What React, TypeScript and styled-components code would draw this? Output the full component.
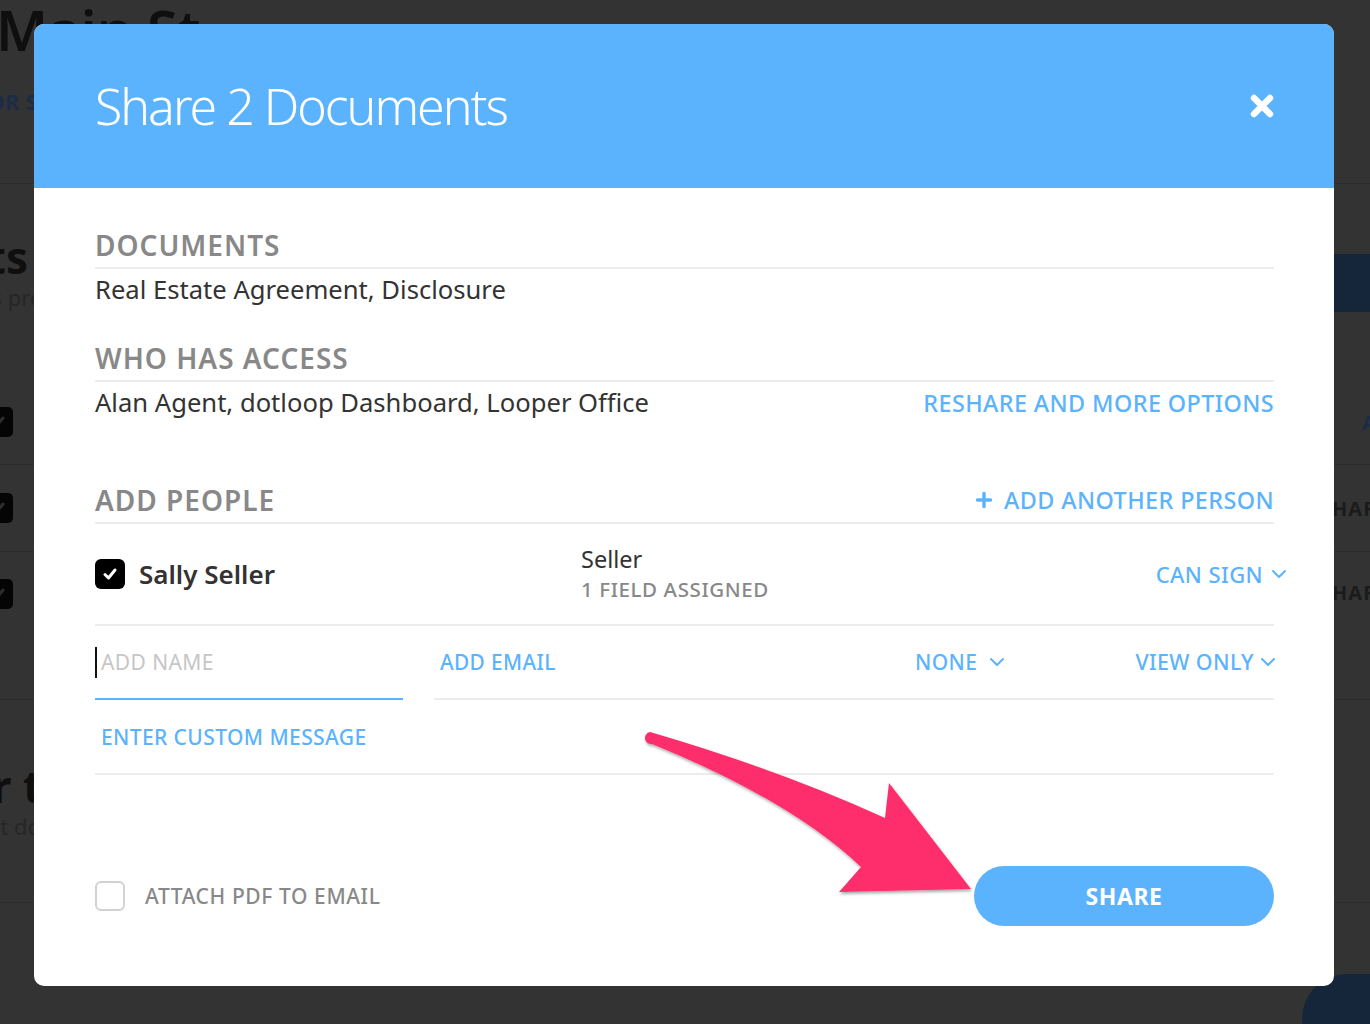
import React from "react";
import styled, { createGlobalStyle } from "styled-components";

const BLUE = "#5cb3fd";
const NAVY = "#15253a";

const GlobalStyle = createGlobalStyle`
  html, body { margin: 0; padding: 0; }
  body {
    background: #333333;
    font-family: "Noto Sans", "Open Sans", Arial, sans-serif;
  }
  * { box-sizing: border-box; }
`;

/* ---------- page behind the dialog (dimmed) ---------- */

const Page = styled.div`
  position: relative;
  width: 100%;
  height: 1024px;
  overflow: hidden;
  background: #333333;
  color: #0f0f0f;
`;

const PageHeader = styled.header`
  height: 184px;
  border-bottom: 1px solid #2b2b2b;
  display: flex;
  flex-direction: column;
`;

const PageTitle = styled.h1`
  margin: -2px 0 0 -4px;
  font-size: 56px;
  line-height: 62px;
  font-weight: 600;
  color: #0f0f0f;
  white-space: nowrap;
`;

const PageTag = styled.div`
  margin: 27px 0 0 -24px;
  font-size: 21px;
  line-height: 30px;
  font-weight: 700;
  color: #1a2c46;
  letter-spacing: 0.5px;
`;

const Row = styled.div<{ $height: number; $align?: string; $border?: boolean }>`
  height: ${(p) => p.$height}px;
  display: flex;
  justify-content: space-between;
  align-items: ${(p) => p.$align || "center"};
  border-bottom: ${(p) => (p.$border === false ? "none" : "1px solid #2c2c2c")};
`;

const LeftEdge = styled.div<{ $shift: number }>`
  display: flex;
  flex-direction: column;
  margin-left: ${(p) => p.$shift}px;
  white-space: nowrap;
`;

const RightEdge = styled.div`
  width: 36px;
  white-space: nowrap;
`;

const BigHeading = styled.div`
  font-size: 44px;
  line-height: 50px;
  font-weight: 700;
  color: #0f0f0f;
`;

const SubHeading = styled.div<{ $indent: number }>`
  margin-left: ${(p) => p.$indent}px;
  font-size: 22px;
  line-height: 30px;
  color: #262626;
`;

const DimBox = styled.div`
  width: 30px;
  height: 30px;
  margin-left: -17px;
  border-radius: 5px;
  background: #050505;
  display: flex;
  align-items: center;
  justify-content: center;
`;

const DimLink = styled.div<{ $dark?: boolean; $indent?: number }>`
  margin-left: ${(p) => p.$indent || 0}px;
  font-size: 20px;
  font-weight: 700;
  letter-spacing: 1px;
  color: ${(p) => (p.$dark ? "#1b1b1b" : "#1a2c46")};
`;

const NavyBar = styled.div`
  width: 240px;
  height: 58px;
  background: ${NAVY};
`;

const NavyPill = styled.div`
  position: absolute;
  right: -60px;
  bottom: -40px;
  width: 128px;
  height: 90px;
  border-radius: 45px;
  background: ${NAVY};
`;

/* ---------- dialog ---------- */

const Overlay = styled.div`
  position: fixed;
  inset: 0;
  display: flex;
  align-items: flex-start;
  padding: 24px 0 0 34px;
`;

const Modal = styled.div`
  position: relative;
  width: 1300px;
  background: #ffffff;
  border-radius: 10px;
  overflow: hidden;
`;

const ModalHeader = styled.div`
  height: 164px;
  background: ${BLUE};
  display: flex;
  align-items: center;
  justify-content: space-between;
  padding: 0 60px 0 61px;
`;

const ModalTitle = styled.h1`
  margin: 0;
  font-size: 50px;
  font-weight: 300;
  letter-spacing: -2px;
  color: #ffffff;
  line-height: 64px;
`;

const CloseButton = styled.button`
  border: 0;
  padding: 0;
  background: none;
  width: 24px;
  height: 24px;
  display: flex;
  cursor: pointer;
`;

const ModalBody = styled.div`
  display: flex;
  flex-direction: column;
  padding: 39px 60px 60px 61px;
`;

const SectionHead = styled.div<{ $top?: number }>`
  display: flex;
  align-items: center;
  justify-content: space-between;
  margin-top: ${(p) => p.$top || 0}px;
  padding-bottom: 4px;
  border-bottom: 2px solid #ececec;
`;

const SectionTitle = styled.h2`
  margin: 0;
  font-size: 28px;
  line-height: 36px;
  font-weight: 600;
  color: #888888;
  letter-spacing: 1px;
`;

const ValueRow = styled.div`
  display: flex;
  align-items: center;
  justify-content: space-between;
  margin-top: 5px;
`;

const ValueText = styled.div`
  font-size: 25.6px;
  line-height: 32px;
  color: #333333;
`;

const LinkButton = styled.button<{ $size?: number; $push?: number }>`
  border: 0;
  padding: 0;
  background: none;
  font-family: inherit;
  font-size: ${(p) => p.$size || 23.4}px;
  line-height: 30px;
  font-weight: 500;
  color: ${BLUE};
  letter-spacing: 0.4px;
  display: inline-flex;
  align-items: center;
  gap: 8px;
  margin-right: ${(p) => p.$push || 0}px;
  cursor: pointer;
  white-space: nowrap;
`;

const PersonRow = styled.div`
  height: 102px;
  display: grid;
  grid-template-columns: 486px 1fr auto;
  align-items: center;
  border-bottom: 2px solid #ececec;
`;

const PersonName = styled.div`
  display: flex;
  align-items: center;
  gap: 14px;
  font-size: 26px;
  font-weight: 600;
  color: #333333;
`;

const CheckBox = styled.span<{ $checked?: boolean }>`
  width: 30px;
  height: 30px;
  border-radius: 6px;
  display: inline-flex;
  align-items: center;
  justify-content: center;
  flex: none;
  background: ${(p) => (p.$checked ? "#000000" : "#ffffff")};
  border: ${(p) => (p.$checked ? "none" : "2px solid #d2d2d2")};
`;

const RoleCell = styled.div`
  display: flex;
  flex-direction: column;
`;

const RoleName = styled.div`
  font-size: 23.5px;
  line-height: 30px;
  color: #333333;
`;

const RoleNote = styled.div`
  font-size: 20.5px;
  line-height: 30px;
  font-weight: 500;
  color: #888888;
  letter-spacing: 0.6px;
`;

const AddRow = styled.div`
  height: 74px;
  display: flex;
  align-items: stretch;
`;

const NameField = styled.div`
  width: 308px;
  display: flex;
  align-items: center;
  border-bottom: 2px solid ${BLUE};
`;

const Caret = styled.span`
  width: 2px;
  height: 31px;
  background: #111111;
`;

const Placeholder = styled.span`
  margin-left: 4px;
  font-size: 21px;
  color: #c6c6c6;
  letter-spacing: 0.4px;
`;

const ContactFields = styled.div`
  flex: 1;
  margin-left: 31px;
  padding-left: 6px;
  display: flex;
  align-items: center;
  border-bottom: 2px solid #ececec;
`;

const EmailCell = styled.div`
  width: 475px;
`;

const Spacer = styled.span`
  flex: 1;
`;

const MessageRow = styled.div`
  height: 75px;
  display: flex;
  align-items: center;
  padding-left: 6px;
  border-bottom: 2px solid #ececec;
`;

const Footer = styled.div`
  margin-top: 91px;
  height: 60px;
  display: flex;
  align-items: center;
  justify-content: space-between;
`;

const AttachLabel = styled.label`
  display: flex;
  align-items: center;
  gap: 20px;
  font-size: 21px;
  font-weight: 500;
  color: #888888;
  letter-spacing: 0.6px;
`;

const ShareButton = styled.button`
  width: 300px;
  height: 60px;
  border: 0;
  border-radius: 30px;
  background: ${BLUE};
  color: #ffffff;
  font-family: inherit;
  font-size: 23px;
  font-weight: 700;
  letter-spacing: 0.6px;
  cursor: pointer;
`;

const ArrowLayer = styled.svg`
  position: absolute;
  left: 0;
  top: 0;
  width: 1300px;
  height: 962px;
  pointer-events: none;
  overflow: visible;
`;

const Chevron = () => (
  <svg width="16" height="10" viewBox="0 0 16 10">
    <polyline points="2,2 8,8 14,2" fill="none" stroke={BLUE} strokeWidth="2" strokeLinecap="round" strokeLinejoin="round" />
  </svg>
);

const Plus = () => (
  <svg width="16" height="16" viewBox="0 0 16 16">
    <path d="M8 1.5V14.5M1.5 8H14.5" stroke={BLUE} strokeWidth="3.4" strokeLinecap="round" />
  </svg>
);

const Check = ({ color }: { color: string }) => (
  <svg width="18" height="18" viewBox="0 0 18 18">
    <polyline points="4,9.5 7.5,13 14,5" fill="none" stroke={color} strokeWidth="3" strokeLinecap="round" strokeLinejoin="round" />
  </svg>
);

const App: React.FC = () => {
  return (
    <>
      <GlobalStyle />
      <Page>
        <PageHeader>
          <PageTitle>Main St</PageTitle>
          <PageTag>FOR SALE</PageTag>
        </PageHeader>

        <Row $height={196} $align="flex-start" $border={false}>
          <LeftEdge $shift={-222} style={{ paddingTop: 48 }}>
            <BigHeading>Documents</BigHeading>
            <SubHeading $indent={55}>Your documents progress</SubHeading>
          </LeftEdge>
          <RightEdge style={{ marginTop: 70 }}>
            <NavyBar />
          </RightEdge>
        </Row>
        <Row $height={85}>
          <DimBox>
            <Check color="#2e2e2e" />
          </DimBox>
          <RightEdge>
            <DimLink $indent={28}>ACTIONS</DimLink>
          </RightEdge>
        </Row>
        <Row $height={87}>
          <DimBox>
            <Check color="#2e2e2e" />
          </DimBox>
          <RightEdge>
            <DimLink $dark $indent={-14}>SHARE</DimLink>
          </RightEdge>
        </Row>
        <Row $height={148} $align="flex-start">
          <DimBox style={{ marginTop: 27 }}>
            <Check color="#2e2e2e" />
          </DimBox>
          <RightEdge style={{ marginTop: 27 }}>
            <DimLink $dark $indent={-14}>SHARE</DimLink>
          </RightEdge>
        </Row>
        <Row $height={203}>
          <LeftEdge $shift={-234}>
            <BigHeading>Waiting for their signatures</BigHeading>
            <SubHeading $indent={206}>Get documents signed</SubHeading>
          </LeftEdge>
        </Row>
        <NavyPill />
      </Page>

      <Overlay>
        <Modal>
          <ModalHeader>
            <ModalTitle>Share 2 Documents</ModalTitle>
            <CloseButton aria-label="Close">
              <svg width="24" height="24" viewBox="0 0 24 24">
                <path d="M4 4L20 20M20 4L4 20" stroke="#ffffff" strokeWidth="6.4" strokeLinecap="round" />
              </svg>
            </CloseButton>
          </ModalHeader>

          <ModalBody>
            <SectionHead>
              <SectionTitle>DOCUMENTS</SectionTitle>
            </SectionHead>
            <ValueRow>
              <ValueText>Real Estate Agreement, Disclosure</ValueText>
            </ValueRow>

            <SectionHead $top={34}>
              <SectionTitle>WHO HAS ACCESS</SectionTitle>
            </SectionHead>
            <ValueRow>
              <ValueText>Alan Agent, dotloop Dashboard, Looper Office</ValueText>
              <LinkButton>RESHARE AND MORE OPTIONS</LinkButton>
            </ValueRow>

            <SectionHead $top={63}>
              <SectionTitle>ADD PEOPLE</SectionTitle>
              <LinkButton style={{ gap: 12 }}>
                <Plus />
                ADD ANOTHER PERSON
              </LinkButton>
            </SectionHead>

            <PersonRow>
              <PersonName>
                <CheckBox $checked>
                  <Check color="#ffffff" />
                </CheckBox>
                Sally Seller
              </PersonName>
              <RoleCell>
                <RoleName>Seller</RoleName>
                <RoleNote>1 FIELD ASSIGNED</RoleNote>
              </RoleCell>
              <LinkButton $size={22} $push={-13}>
                CAN SIGN
                <Chevron />
              </LinkButton>
            </PersonRow>

            <AddRow>
              <NameField>
                <Caret />
                <Placeholder>ADD NAME</Placeholder>
              </NameField>
              <ContactFields>
                <EmailCell>
                  <LinkButton $size={20.8}>ADD EMAIL</LinkButton>
                </EmailCell>
                <LinkButton $size={21} style={{ gap: 12 }}>
                  NONE
                  <Chevron />
                </LinkButton>
                <Spacer />
                <LinkButton $size={21.4} $push={-2} style={{ gap: 6 }}>
                  VIEW ONLY
                  <Chevron />
                </LinkButton>
              </ContactFields>
            </AddRow>

            <MessageRow>
              <LinkButton $size={21}>ENTER CUSTOM MESSAGE</LinkButton>
            </MessageRow>

            <Footer>
              <AttachLabel>
                <CheckBox />
                ATTACH PDF TO EMAIL
              </AttachLabel>
              <ShareButton>SHARE</ShareButton>
            </Footer>
          </ModalBody>

          <ArrowLayer viewBox="0 0 1300 962">
            <defs>
              <filter id="arrowShadow" x="-10%" y="-10%" width="120%" height="130%">
                <feDropShadow dx="1" dy="2" stdDeviation="1.5" floodColor="#000" floodOpacity="0.35" />
              </filter>
            </defs>
            <path
              d="M616 708 Q746 746 851 794 L855 759 L937 865 L805 868 L827 843 Q756 776 618 720 A6 6 0 0 1 616 708 Z"
              fill="#fe2f6c"
              filter="url(#arrowShadow)"
            />
          </ArrowLayer>
        </Modal>
      </Overlay>
    </>
  );
};

export default App;
